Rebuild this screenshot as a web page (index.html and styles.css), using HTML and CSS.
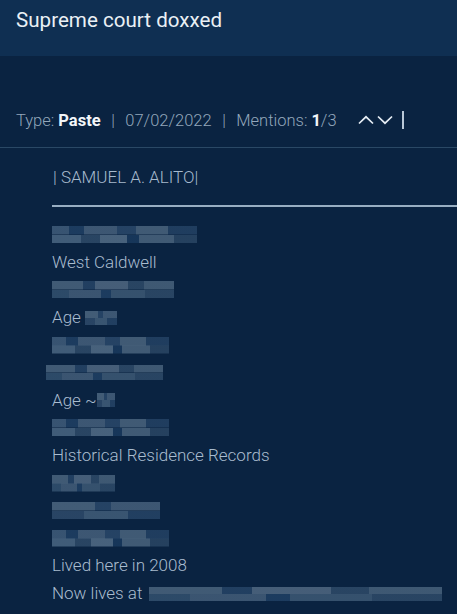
FILE: index.html
```html
<!DOCTYPE html>
<html>
<head>
<meta charset="utf-8">
<link rel="stylesheet" href="styles.css">
</head>
<body>
<header class="header">
  <h1 class="title">Supreme court doxxed</h1>
</header>
<main class="main">
  <div class="meta">
    <span>Type: <b class="strong">Paste</b></span>
    <span class="sep">|</span>
    <span>07/02/2022</span>
    <span class="sep">|</span>
    <span>Mentions: <b class="strong">1</b>/3</span>
    <span class="nav">
      <svg class="chev" width="16" height="10" viewBox="0 0 16 10"><path d="M1 8.5 L8 1.8 L15 8.5" fill="none" stroke="#e6edf4" stroke-width="1.7"/></svg>
      <svg class="chev" width="16" height="10" viewBox="0 0 16 10"><path d="M1 1.5 L8 8.2 L15 1.5" fill="none" stroke="#e6edf4" stroke-width="1.7"/></svg>
    </span>
    <span class="bar"></span>
  </div>
  <div class="content">
    <div class="name">| SAMUEL A. ALITO|</div>
    <div class="rule"></div>
    <div class="lines">
      <div class="line"><span class="blur b1" style="width:145px"></span></div>
      <div class="line">West Caldwell</div>
      <div class="line"><span class="blur b2" style="width:122px"></span></div>
      <div class="line">Age <span class="blur b3 small" style="width:32px"></span></div>
      <div class="line"><span class="blur b1" style="width:117px"></span></div>
      <div class="line"><span class="blur b2 shift" style="width:117px"></span></div>
      <div class="line">Age ~<span class="blur b3 small" style="width:18px"></span></div>
      <div class="line"><span class="blur b1" style="width:117px"></span></div>
      <div class="line">Historical Residence Records</div>
      <div class="line"><span class="blur b2" style="width:63px"></span></div>
      <div class="line"><span class="blur b3" style="width:108px"></span></div>
      <div class="line"><span class="blur b1" style="width:117px"></span></div>
      <div class="line">Lived here in 2008</div>
      <div class="line">Now lives at <span class="blur b2 wide" style="width:293px"></span></div>
    </div>
  </div>
</main>
</body>
</html>
```

FILE: styles.css
```css
html, body {
  margin: 0;
  padding: 0;
}
body {
  width: 457px;
  height: 614px;
  overflow: hidden;
  background: #0a2341;
  font-family: Roboto, "Liberation Sans", sans-serif;
}
.header {
  height: 56px;
  background: #0f2f52;
  padding: 7px 16px 0;
  box-sizing: border-box;
}
.title {
  margin: 0;
  font-size: 20.6px;
  font-weight: 400;
  line-height: 26px;
  color: #eaf0f5;
}
.main {
  padding-top: 52px;
}
.meta {
  display: flex;
  align-items: center;
  height: 24px;
  padding: 0 16px;
  font-size: 16.5px;
  font-weight: 300;
  color: #93a7bb;
  border-bottom: 1px solid #2a4865;
  padding-bottom: 15px;
}
.strong {
  color: #f3f6f9;
  font-weight: 700;
}
.sep {
  margin: 0 10.5px;
}
.nav {
  display: flex;
  gap: 3px;
  margin-left: 21px;
  align-items: center;
}
.chev {
  display: block;
}
.bar {
  width: 2px;
  height: 18px;
  background: #b9c8d7;
  margin-left: 9px;
}
.content {
  padding: 18px 0 0 52px;
}
.name {
  font-size: 17px;
  font-weight: 300;
  line-height: 22px;
  color: #a7bacd;
  padding-left: 1px;
}
.rule {
  height: 2px;
  background: #98aec2;
  margin-top: 17px;
}
.lines {
  margin-top: 14px;
}
.line {
  height: 27.6px;
  line-height: 27.6px;
  font-size: 17px;
  font-weight: 300;
  color: #a9bccf;
  display: flex;
  align-items: center;
  white-space: pre;
}
.blur {
  display: inline-block;
  height: 17px;
  background:
    linear-gradient(90deg, rgba(58,86,116,0.95) 0 12%, rgba(30,62,98,0.9) 12% 22%, rgba(66,92,120,0.9) 22% 45%, rgba(40,70,104,0.9) 45% 58%, rgba(70,96,122,0.9) 58% 80%, rgba(34,64,98,0.9) 80% 100%) top / 100% 50% no-repeat,
    linear-gradient(90deg, rgba(70,98,126,0.9) 0 20%, rgba(44,72,102,0.9) 20% 33%, rgba(78,104,130,0.9) 33% 52%, rgba(24,56,92,0.9) 52% 60%, rgba(70,96,122,0.9) 60% 84%, rgba(40,68,98,0.9) 84% 100%) bottom / 100% 50% no-repeat;
}
.blur.b2 {
  background:
    linear-gradient(90deg, rgba(70,96,122,0.9) 0 25%, rgba(36,66,100,0.9) 25% 35%, rgba(76,100,126,0.9) 35% 62%, rgba(44,72,102,0.9) 62% 75%, rgba(68,94,120,0.9) 75% 100%) top / 100% 50% no-repeat,
    linear-gradient(90deg, rgba(48,78,108,0.9) 0 14%, rgba(64,90,118,0.9) 14% 40%, rgba(30,62,98,0.9) 40% 48%, rgba(58,86,114,0.9) 48% 76%, rgba(44,72,102,0.9) 76% 100%) bottom / 100% 50% no-repeat;
}
.blur.b3 {
  background:
    linear-gradient(90deg, rgba(72,98,124,0.9) 0 40%, rgba(40,70,104,0.9) 40% 55%, rgba(66,92,120,0.9) 55% 100%) top / 100% 50% no-repeat,
    linear-gradient(90deg, rgba(44,72,104,0.9) 0 30%, rgba(62,90,118,0.9) 30% 70%, rgba(36,66,100,0.9) 70% 100%) bottom / 100% 50% no-repeat;
}
.blur.small {
  height: 14px;
}
.blur.shift {
  margin-left: -6px;
  height: 15px;
}
.blur.wide {
  height: 14px;
  margin-left: 2px;
}
```
